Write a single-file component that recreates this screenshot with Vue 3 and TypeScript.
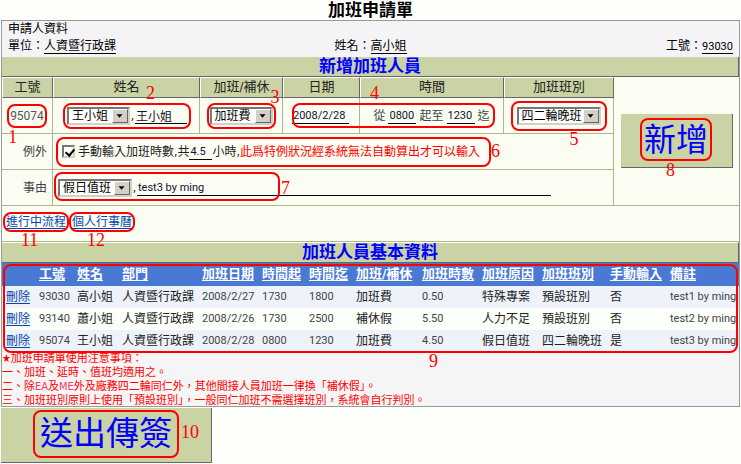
<script setup lang="ts">
import { ref } from 'vue'

interface Column { label: string; width: number }
interface Entry { id: string; cells: string[] }

const employee = ref('王小姐')
const employeeName = ref('王小姐')
const compensation = ref('加班費')
const date = ref('2008/2/28')
const timeFrom = ref('0800')
const timeTo = ref('1230')
const shift = ref('四二輪晚班')
const manual = ref(true)
const hours = ref('4.5')
const reason = ref('假日值班')
const note = ref('test3 by ming')

const columns: Column[] = [
  { label: '', width: 33 },
  { label: '工號', width: 38 },
  { label: '姓名', width: 45 },
  { label: '部門', width: 80 },
  { label: '加班日期', width: 60 },
  { label: '時間起', width: 47 },
  { label: '時間迄', width: 47 },
  { label: '加班/補休', width: 66 },
  { label: '加班時數', width: 60 },
  { label: '加班原因', width: 60 },
  { label: '加班班別', width: 68 },
  { label: '手動輸入', width: 60 },
  { label: '備註', width: 73 },
]
const totalWidth = columns.reduce((sum, c) => sum + c.width, 0)

const entries = ref<Entry[]>([
  { id: '93030', cells: ['93030', '高小姐', '人資暨行政課', '2008/2/27', '1730', '1800', '加班費', '0.50', '特殊專案', '預設班別', '否', 'test1 by ming'] },
  { id: '93140', cells: ['93140', '蕭小姐', '人資暨行政課', '2008/2/26', '1730', '2500', '補休假', '5.50', '人力不足', '預設班別', '否', 'test2 by ming'] },
  { id: '95074', cells: ['95074', '王小姐', '人資暨行政課', '2008/2/28', '0800', '1230', '加班費', '4.50', '假日值班', '四二輪晚班', '是', 'test3 by ming'] },
])
</script>

<template>
  <main class="page">
    <h1>加班申請單</h1>
    <div class="sheet">
      <section class="info">
        <div>申請人資料</div>
        <div class="info-row">
          <span>單位：<u>人資暨行政課</u></span>
          <span>姓名：<u>高小姐</u></span>
          <span class="end">工號：<u>93030</u></span>
        </div>
      </section>

      <h2 class="band">新增加班人員</h2>
      <form class="grid" @submit.prevent>
        <div class="head">工號</div>
        <div class="head">姓名</div>
        <div class="head">加班/補休</div>
        <div class="head">日期</div>
        <div class="head">時間</div>
        <div class="head">加班班別</div>
        <div class="cell add-cell">
          <button type="submit" class="big add"><span class="ring r8">新增<i>8</i></span></button>
        </div>

        <div class="cell center"><span class="ring r1 muted">95074<i>1</i></span></div>
        <div class="cell name-cell">
          <span class="ring r2">
            <span class="select w62">
              <select v-model="employee" aria-label="姓名"><option>王小姐</option></select>
              <svg viewBox="0 0 16 14"><path d="M4 5h7L7.500 9z" /></svg>
            </span>
            <span class="comma">,</span>
            <input v-model="employeeName" class="line w52" aria-label="員工姓名" />
            <i>2</i>
          </span>
        </div>
        <div class="cell center">
          <span class="ring r3">
            <span class="select w62">
              <select v-model="compensation" aria-label="加班/補休"><option>加班費</option><option>補休假</option></select>
              <svg viewBox="0 0 16 14"><path d="M4 5h7L7.500 9z" /></svg>
            </span>
            <i>3</i>
          </span>
        </div>
        <div class="cell date-cell"><input v-model="date" class="line w57" aria-label="日期" /></div>
        <div class="cell time-cell">
          <label for="from">從</label><input id="from" v-model="timeFrom" class="line w28" />
          <label for="to">起至</label><input id="to" v-model="timeTo" class="line w28" /><span>迄</span>
        </div>
        <div class="cell center">
          <span class="ring r5">
            <span class="select w84">
              <select v-model="shift" aria-label="加班班別"><option>四二輪晚班</option><option>預設班別</option></select>
              <svg viewBox="0 0 16 14"><path d="M4 5h7L7.500 9z" /></svg>
            </span>
            <i>5</i>
          </span>
        </div>
        <span class="span-mark"><i>4</i></span>

        <div class="cell label">例外</div>
        <div class="cell wide">
          <span class="ring r6">
            <input id="manual" v-model="manual" type="checkbox" />
            <label for="manual">手動輸入加班時數,共</label>
            <input v-model="hours" class="line w22" aria-label="時數" />
            <span>小時,<span class="red">此爲特例狀況經系統無法自動算出才可以輸入</span></span>
            <i>6</i>
          </span>
        </div>

        <div class="cell label">事由</div>
        <div class="cell wide reason">
          <span class="select w73">
            <select v-model="reason" aria-label="事由"><option>假日值班</option></select>
            <svg viewBox="0 0 16 14"><path d="M4 5h7L7.500 9z" /></svg>
          </span>
          <span class="comma">,</span>
          <input v-model="note" class="line grow" aria-label="事由說明" />
          <span class="reason-mark"><i>7</i></span>
        </div>

        <nav class="links">
          <a href="#flow" class="ring r11">進行中流程<i>11</i></a>
          <a href="#calendar" class="ring r12">個人行事曆<i>12</i></a>
        </nav>
      </form>

      <h2 class="band second">加班人員基本資料</h2>
      <div class="table-wrap">
        <table>
          <colgroup>
            <col v-for="(c, i) in columns" :key="i" :style="{ width: (c.width / totalWidth) * 100 + '%' }" />
          </colgroup>
          <thead>
            <tr><th v-for="(c, i) in columns" :key="i" scope="col">{{ c.label }}</th></tr>
          </thead>
          <tbody>
            <tr v-for="e in entries" :key="e.id">
              <td><a href="#delete">刪除</a></td>
              <td v-for="(t, i) in e.cells" :key="i">{{ t }}</td>
            </tr>
          </tbody>
        </table>
        <span class="table-mark"><i>9</i></span>
      </div>

      <section class="notes">
        <p>★加班申請單使用注意事項：</p>
        <p>一、加班、延時、值班均適用之。</p>
        <p>二、除<span class="latin">EA</span>及<span class="latin">ME</span>外及廠務四二輪同仁外，其他間接人員加班一律換「補休假」。</p>
        <p>三、加班班別原則上使用「預設班別」，一般同仁加班不需選擇班別，系統會自行判別。</p>
      </section>
    </div>
    <button type="button" class="big send"><span class="ring r10">送出傳簽<i>10</i></span></button>
  </main>
</template>

<style>
body { background: #fdfffa; }
</style>

<style scoped>
* { box-sizing: border-box; }
.page {
  padding: 0 1px;
  font-family: "DejaVu Sans Condensed", "Noto Sans CJK TC", sans-serif;
  font-size: 12px;
  line-height: 16px;
  color: #222;
}
h1, h2, p { margin: 0; }
h1 { height: 20px; font-size: 17px; line-height: 20px; text-align: center; color: #000; }
.sheet { border: 1px solid #999; background: #f5f5f5; }
.info { height: 36px; padding: 0 6px; line-height: 17px; color: #000; background: #f4f4f6; }
.info-row { display: grid; grid-template-columns: 1fr auto 1fr; }
.info u { text-decoration: none; border-bottom: 1px solid #000; }
.end { text-align: right; }
.end u { font-family: Roboto, sans-serif; font-size: 11px; }

.band {
  height: 20px;
  font-size: 17px;
  line-height: 18px;
  text-align: center;
  color: #00f;
  background: #cad3a3;
  border-bottom: 1px solid #666;
  border-right: 1px solid #666;
}
.band.second { height: 21px; border-top: 1px solid #fff; }

.grid {
  position: relative;
  display: grid;
  grid-template-columns: 51fr 147fr 83fr 77fr 144fr 110fr 125fr;
  grid-template-rows: 21px 36px 36px 36px 36px;
  background: #fbfdf3;
}
.grid > * { min-width: 0; }
.head {
  font-size: 13px;
  line-height: 17px;
  text-align: center;
  white-space: nowrap;
  color: #222;
  background: #cad3a3;
  border: 1px solid #666;
  border-top-color: #fff;
  border-left-color: #fff;
}
.cell {
  display: flex;
  align-items: center;
  border-right: 1px solid #adb78a;
  border-bottom: 1px solid #adb78a;
  white-space: nowrap;
}
.center { justify-content: center; }
.muted { font-family: Roboto, sans-serif; font-size: 12px; color: #555; }
.add-cell { grid-column: 7; grid-row: 1 / 5; justify-content: center; border-right: 0; }
.name-cell { padding-left: 14px; }
.date-cell { padding-left: 9px; }
.time-cell { justify-content: center; gap: 3px; color: #444; }
.label { justify-content: flex-end; padding-right: 5px; color: #444; }
.wide { grid-column: 2 / 7; padding-left: 9px; }
.reason { position: relative; padding-left: 5px; padding-right: 62px; }
.red { color: #f00; }
.links { grid-column: 1 / 8; display: flex; align-items: center; gap: 6px; padding: 0 4px 4px; border-bottom: 1px solid #adb78a; }
a { color: #0645ad; text-underline-offset: 2px; }

.select {
  position: relative;
  display: flex;
  height: 18px;
  border: 2px solid #d4d0c8;
  border-top-color: #777;
  border-left-color: #777;
  background: #fff;
}
select {
  appearance: none;
  width: 100%;
  height: 14px;
  padding: 0 0 0 3px;
  border: 0;
  border-radius: 0;
  background: transparent;
  font: inherit;
  line-height: 14px;
  color: #000;
}
.select svg {
  position: absolute;
  top: 0;
  right: 0;
  width: 16px;
  height: 14px;
  background: #d4d0c8;
  border: 1px solid #fff;
  border-right-color: #666;
  border-bottom-color: #666;
  pointer-events: none;
}
.w62 { width: 63px; }
.w84 { width: 84px; }
.w73 { width: 74px; }
.comma { width: 5px; text-align: center; }
.line {
  height: 17px;
  padding: 0 1px;
  border: 0;
  border-bottom: 1px solid #000;
  background: transparent;
  font: 11px/16px Roboto, "Noto Sans CJK TC", sans-serif;
  color: #113;
}
.w52 { width: 52px; font-size: 12px; }
.w57 { width: 57px; }
.w28 { width: 28px; }
.w22 { width: 23px; }
.grow { flex: 1; min-width: 0; }
input[type="checkbox"] {
  appearance: none;
  width: 13px;
  height: 13px;
  margin: 0 3px 0 0;
  border: 2px solid #d4d0c8;
  border-top-color: #777;
  border-left-color: #777;
  background: #fff;
}
input[type="checkbox"]:checked::after {
  content: "";
  display: block;
  width: 4px;
  height: 7px;
  margin: 0 0 0 3px;
  border: solid #000;
  border-width: 0 2px 2px 0;
  transform: rotate(40deg);
}

.big {
  display: flex;
  align-items: center;
  justify-content: center;
  padding: 0 0 8px;
  border: 0 solid #666;
  border-width: 0 1px 1px 0;
  background: #cad3a3;
  color: #00f;
  font: 32px/38px "Noto Sans CJK TC", sans-serif;
}
.add { width: 112px; height: 54px; }
.send { width: 211px; height: 55px; margin-top: 1px; font-size: 33px; }

/* Numbered callouts that lie over the controls */
.ring { position: relative; display: inline-flex; align-items: center; }
.ring::after, .span-mark, .table-mark, .reason-mark {
  border: 2px solid #f00;
  border-radius: 8px;
  pointer-events: none;
}
.ring::after { content: ""; position: absolute; inset: -4px -3px; }
i {
  position: absolute;
  font: normal 18px/18px "Liberation Serif", serif;
  color: #f00;
}
.r1::after { inset: -4px -3px; }
.r1 i { left: -2px; top: 20px; }
.r2::after { inset: -4px -4px; }
.r2 i { left: 79px; top: -23px; }
.r3 i { right: -7px; top: -19px; }
.r5::after { inset: -6px -6px; }
.r5 i { right: 22px; top: 23px; }
.r6::after { inset: -6px -11px -7px -6px; }
.r6 i { right: -20px; top: -1px; }
.r8::after { inset: 0 -4px -5px; }
.r8 i { left: 22px; top: 44px; line-height: 16px; }
.r10::after { inset: -2px -7px -8px; }
.r10 i { right: -27px; top: 11px; }
.r11::after, .r12::after { inset: -2px -3px; }
.r11 i, .r12 i { left: 15px; top: 17px; }
.span-mark { position: absolute; grid-column: 4 / 6; grid-row: 2 / 3; inset: 5px 9px 6px 9px; }
.span-mark i { left: 76px; top: -21px; }
.reason-mark { position: absolute; left: 1px; top: 2px; width: 226px; height: 29px; }
.reason-mark i { right: -12px; top: 5px; }

.table-wrap { position: relative; }
.table-mark { position: absolute; inset: 1px 1px -1px 1px; }
.table-mark i { left: 58%; bottom: -19px; }
table { width: 100%; table-layout: fixed; border-collapse: collapse; }
th, td { padding: 0 0 0 4px; text-align: left; white-space: nowrap; }
th {
  height: 23px;
  padding-bottom: 2px;
  font-size: 13px;
  line-height: 18px;
  color: #fff;
  background: #4a79d3;
  text-decoration: underline;
  text-underline-offset: 2px;
}
td { height: 22px; font-size: 12px; line-height: 18px; }
td:nth-child(2), td:nth-child(5), td:nth-child(6), td:nth-child(7), td:nth-child(9), td:nth-child(13) { font-family: Roboto, sans-serif; font-size: 11px; color: #444; }
tbody tr { background: #eef2fa; }
tbody tr:nth-child(2) { background: #fdfffa; }
.notes { height: 54px; color: #f00; font-size: 11px; line-height: 14px; white-space: nowrap; }
.latin { color: #f36; }
</style>
